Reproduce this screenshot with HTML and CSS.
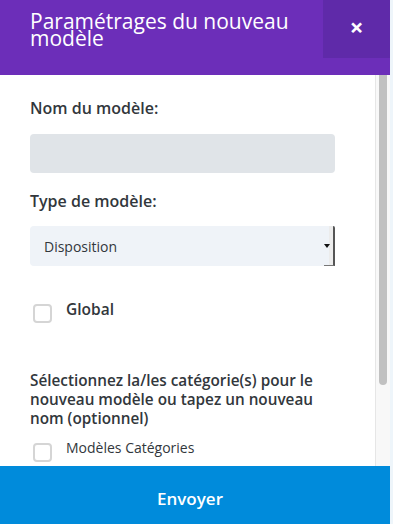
FILE: index.html
```html
<!DOCTYPE html>
<html lang="fr">

<head>
  <meta charset="UTF-8" />
  <meta name="viewport" content="width=device-width, initial-scale=1.0" />
  <title>Paramétrages du nouveau modèle</title>
  <link rel="stylesheet" href="styles.css">
</head>

<body>
  <div class="modal">
    <div class="modal-header">
      <h2 class="modal-title">Paramétrages du nouveau modèle</h2>
      <button class="close" type="button">&times;</button>
    </div>

    <div class="modal-main">
      <div class="modal-body">
        <label class="field-label">Nom du modèle:</label>
        <div class="text-input"></div>

        <label class="field-label">Type de modèle:</label>
        <div class="select">
          <span>Disposition</span>
          <span class="select-btn"><i class="arrow"></i></span>
        </div>

        <div class="check-row global">
          <span class="box"></span>
          <span class="check-label">Global</span>
        </div>

        <p class="cats">Sélectionnez la/les catégorie(s) pour le nouveau modèle ou tapez un nouveau nom (optionnel)</p>

        <div class="check-row small">
          <span class="box"></span>
          <span>Modèles Catégories</span>
        </div>
      </div>
      <div class="scrollbar"><div class="thumb"></div></div>
    </div>

    <button class="submit" type="button">Envoyer</button>
  </div>
</body>

</html>
```

FILE: styles.css
```css
body {
  margin: 0;
  padding: 0;
  background: #eef5fa;
  font-family: 'Open Sans', 'Noto Sans', sans-serif;
  color: #32373c;
}

.modal {
  width: 390px;
  height: 524px;
  display: flex;
  flex-direction: column;
  background: white;
}

.modal-header {
  height: 75px;
  flex: none;
  background: #6c2eb9;
  display: flex;
  align-items: flex-start;
}

.modal-title {
  flex: 1;
  margin: 0;
  padding: 13px 0 0 30px;
  color: white;
  font-size: 21px;
  font-weight: 400;
  line-height: 17px;
}

.close {
  width: 67px;
  height: 58px;
  border: none;
  background: #5f2aa9;
  color: white;
  font-size: 24px;
  font-weight: 700;
  padding: 0 0 6px;
  font-family: 'Open Sans', sans-serif;
}

.modal-main {
  flex: 1;
  display: flex;
  overflow: hidden;
}

.modal-body {
  flex: 1;
  padding: 23px 40px 0 30px;
}

/* fake scrollbar, the screenshot hides native ones */
.scrollbar {
  width: 14px;
  flex: none;
  background: #f8f8f8;
  border-left: 1px solid #e6e6e6;
}

.thumb {
  width: 8px;
  height: 310px;
  margin-left: 3px;
  background: #c1c1c1;
  border-radius: 0 0 4px 4px;
}

.field-label {
  display: block;
  margin: 0;
  font-size: 16px;
  font-weight: 600;
  line-height: 20px;
}

.text-input {
  height: 39px;
  margin: 16px 0 18px;
  background: #e0e4e8;
  border-radius: 4px;
}

.select {
  height: 40px;
  margin-top: 15px;
  display: flex;
  align-items: center;
  padding-left: 14px;
  background: #eff3f8;
  border-radius: 4px 0 0 4px;
  font-size: 14px;
}

.select span:first-child {
  flex: 1;
}

.select-btn {
  width: 9px;
  height: 39px;
  align-self: flex-start;
  position: relative;
  background: linear-gradient(to right, #eff3f8 0, #eff3f8 60%, #ececec 60%);
  border-right: 2px solid #555;
  border-bottom: 1px solid #777;
  border-top-right-radius: 2px;
}

.arrow {
  position: absolute;
  left: 0;
  top: 18px;
  border-left: 3px solid transparent;
  border-right: 3px solid transparent;
  border-top: 4px solid #111;
}

.check-row {
  display: flex;
  align-items: flex-start;
  gap: 14px;
  padding-left: 3px;
}

.box {
  width: 15px;
  height: 15px;
  flex: none;
  border: 2px solid #d5d5d5;
  border-radius: 4px;
  background: white;
}

.global {
  margin-top: 38px;
}

.check-label {
  font-size: 15.5px;
  font-weight: 600;
  line-height: 16px;
  margin-top: -3px;
}

.cats {
  margin: 48px 0 0;
  font-size: 15.3px;
  font-weight: 600;
  line-height: 19px;
}

.small {
  margin-top: 15px;
  font-size: 14px;
}

.small span:last-child {
  margin-top: -5px;
}

.submit {
  height: 58px;
  flex: none;
  border: none;
  background: #008bdb;
  color: white;
  font-family: 'Open Sans', sans-serif;
  font-size: 17px;
  font-weight: 600;
  padding: 6px 0 0;
  text-indent: -10px;
}
```
